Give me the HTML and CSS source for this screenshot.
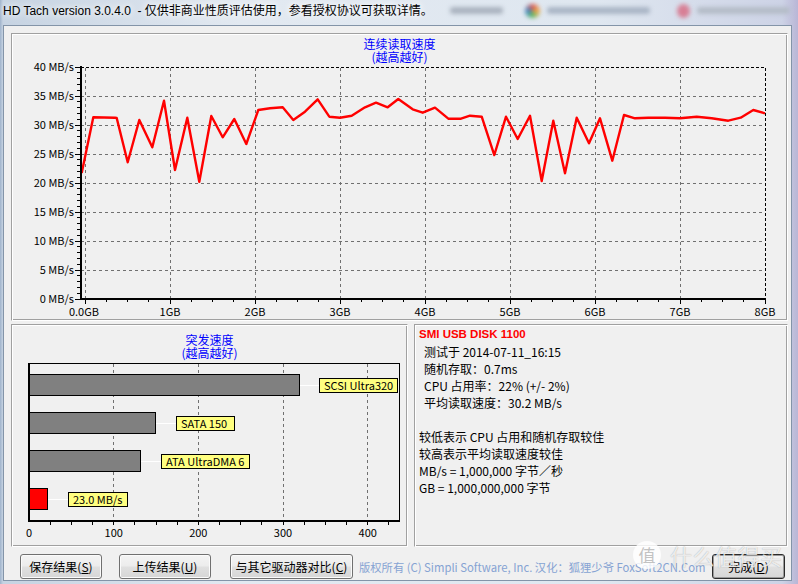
FILE: index.html
```html
<!DOCTYPE html>
<html lang="zh-CN">
<head>
<meta charset="utf-8">
<title>HD Tach</title>
<link rel="stylesheet" href="styles.css">
</head>
<body>
<div class="window">
  <div class="titlebar">
    <span class="title-text">HD Tach version 3.0.4.0&nbsp; - 仅供非商业性质评估使用，参看授权协议可获取详情。</span>
    <span class="glass">
      <span class="blur b1"></span>
      <span class="blur b2"></span>
      <span class="blur b3"></span>
      <span class="blur b4"></span>
      <span class="blur b5"></span>
    </span>
  </div>
  <div class="client">
    <section class="panel top-panel">
      <div class="chart-title">连续读取速度<br>(越高越好)</div>
      <svg class="plot" width="773" height="256" viewBox="13 63 773 256">
        <path class="grid" d="M81 96.5H765M81 125.5H765M81 154.5H765M81 183.5H765M81 212.5H765M81 241.5H765M81 270.5H765"/>
        <path class="grid" d="M85.5 68V299M170.5 68V299M255.5 68V299M340.5 68V299M425.5 68V299M510.5 68V299M595.5 68V299M680.5 68V299"/>
        <path class="frame-dash" d="M81 67.5H765.5V299"/>
        <path class="ticks" d="M75 67.5h5M75 96.5h5M75 125.5h5M75 154.5h5M75 183.5h5M75 212.5h5M75 241.5h5M75 270.5h5M75 299.5h5M77 72.5h3M77 78.5h3M77 84.5h3M77 90.5h3M77 101.5h3M77 107.5h3M77 113.5h3M77 119.5h3M77 130.5h3M77 136.5h3M77 142.5h3M77 148.5h3M77 159.5h3M77 165.5h3M77 171.5h3M77 177.5h3M77 188.5h3M77 194.5h3M77 200.5h3M77 206.5h3M77 217.5h3M77 223.5h3M77 229.5h3M77 235.5h3M77 246.5h3M77 252.5h3M77 258.5h3M77 264.5h3M77 275.5h3M77 281.5h3M77 287.5h3M77 293.5h3"/>
        <path class="ticks" d="M85.5 300v4M170.5 300v4M255.5 300v4M340.5 300v4M425.5 300v4M510.5 300v4M595.5 300v4M680.5 300v4M765.5 300v4M106.5 300v2M127.5 300v2M148.5 300v2M191.5 300v2M212.5 300v2M233.5 300v2M276.5 300v2M297.5 300v2M318.5 300v2M361.5 300v2M382.5 300v2M403.5 300v2M446.5 300v2M467.5 300v2M488.5 300v2M531.5 300v2M552.5 300v2M573.5 300v2M616.5 300v2M637.5 300v2M658.5 300v2M701.5 300v2M722.5 300v2M743.5 300v2"/>
        <polyline class="data" points="81.7,173 93.3,117.3 115,117.7 116.7,118 127.7,162.3 139.3,120 152.3,147.3 164,100.7 175,170 187.3,117.7 199.3,181.7 211.3,116 222.7,137.3 234.3,119 246.3,144 258.3,110 270,108.3 282.7,107.3 293.3,120 305,111.7 317.7,99.3 329.3,116.7 340,117.7 351.7,115.7 365,107.3 376,102.7 387.7,107.3 398.3,99 412.7,109.3 422.7,112.7 435,107.7 448.3,118.7 461,118.7 470,115.7 481.7,116.7 494.3,155 506,116.7 517.7,139 530,115.7 541.7,181 553.3,120.7 565,173.3 576.7,117.7 589,143.3 600,118.3 612.3,160.7 624,115 635,118.3 648.3,117.7 665,117.7 680,118.3 696.7,116.7 711.7,118.3 728.3,120.7 740.7,117.7 753.3,110 765,113.3"/>
        <path class="axis" d="M81 66V299H766"/>
        <text class="lbl end" x="74" y="71">40 MB/s</text>
        <text class="lbl end" x="74" y="100">35 MB/s</text>
        <text class="lbl end" x="74" y="129">30 MB/s</text>
        <text class="lbl end" x="74" y="158">25 MB/s</text>
        <text class="lbl end" x="74" y="187">20 MB/s</text>
        <text class="lbl end" x="74" y="216">15 MB/s</text>
        <text class="lbl end" x="74" y="245">10 MB/s</text>
        <text class="lbl end" x="74" y="274">5 MB/s</text>
        <text class="lbl end" x="74" y="303">0 MB/s</text>
        <text class="lbl mid" x="84" y="316">0.0GB</text>
        <text class="lbl mid" x="170" y="316">1GB</text>
        <text class="lbl mid" x="255" y="316">2GB</text>
        <text class="lbl mid" x="340" y="316">3GB</text>
        <text class="lbl mid" x="425" y="316">4GB</text>
        <text class="lbl mid" x="510" y="316">5GB</text>
        <text class="lbl mid" x="595" y="316">6GB</text>
        <text class="lbl mid" x="680" y="316">7GB</text>
        <text class="lbl mid" x="765" y="316">8GB</text>
      </svg>
    </section>
    <div class="lower">
      <section class="panel burst-panel">
        <div class="chart-title burst-title">突发速度<br>(越高越好)</div>
        <svg class="plot" width="393" height="186" viewBox="13 359 393 186">
          <path class="grid" d="M113.5 364V520M198.5 364V520M283.5 364V520M367.5 364V520"/>
          <path class="ticks" d="M50.5 522v3M71.5 522v3M92.5 522v3M113.5 522v3M134.5 522v3M156.5 522v3M177.5 522v3M198.5 522v3M219.5 522v3M240.5 522v3M261.5 522v3M283.5 522v3M304.5 522v3M325.5 522v3M346.5 522v3M367.5 522v3M388.5 522v3"/>
          <path class="frame-thin" d="M29 363.5H399.5V521"/>
          <path class="connector" d="M299 385.5H319M155.5 423.5H176M140.5 461.5H161M47.5 499.5H68"/>
          <rect class="bar" x="29.5" y="374.5" width="269.5" height="21"/>
          <rect class="bar" x="29.5" y="412.5" width="126" height="21"/>
          <rect class="bar" x="29.5" y="450.5" width="111" height="21"/>
          <rect class="bar mine" x="29.5" y="488.5" width="18" height="21"/>
          <rect class="tag" x="319.5" y="378.5" width="78" height="14"/>
          <rect class="tag" x="176.5" y="416.5" width="58" height="14"/>
          <rect class="tag" x="161.5" y="454.5" width="88" height="14"/>
          <rect class="tag" x="68.5" y="492.5" width="59" height="14"/>
          <text class="tag-text" x="324" y="390">SCSI Ultra320</text>
          <text class="tag-text" x="181" y="428">SATA 150</text>
          <text class="tag-text" x="166" y="466">ATA UltraDMA 6</text>
          <text class="tag-text" x="73" y="504">23.0 MB/s</text>
          <path class="axis" d="M29 363V521H400"/>
          <text class="lbl mid" x="29" y="537">0</text>
          <text class="lbl mid" x="113.7" y="537">100</text>
          <text class="lbl mid" x="198.3" y="537">200</text>
          <text class="lbl mid" x="283" y="537">300</text>
          <text class="lbl mid" x="367.7" y="537">400</text>
        </svg>
      </section>
      <section class="panel info-panel">
        <div class="disk-name">SMI USB DISK 1100</div>
        <div class="ind">测试于 2014-07-11_16:15</div>
        <div class="ind">随机存取：0.7ms</div>
        <div class="ind">CPU 占用率：22% (+/- 2%)</div>
        <div class="ind">平均读取速度：30.2 MB/s</div>
        <div class="blank"></div>
        <div>较低表示 CPU 占用和随机存取较佳</div>
        <div>较高表示平均读取速度较佳</div>
        <div>MB/s = 1,000,000 字节／秒</div>
        <div>GB = 1,000,000,000 字节</div>
      </section>
    </div>
    <div class="buttons">
      <button class="btn btn-save">保存结果(<u>S</u>)</button>
      <button class="btn btn-upload">上传结果(<u>U</u>)</button>
      <button class="btn btn-compare">与其它驱动器对比(<u>C</u>)</button>
      <span class="copyright">版权所有 (C) Simpli Software, Inc. 汉化：狐狸少爷 FoxSoft2CN.Com</span>
      <button class="btn btn-done">完成(<u>D</u>)</button>
    </div>
  </div>
  <div class="watermark">
    <span class="wm-logo">值</span>
    <span class="wm-text">什么值得买</span>
  </div>
</div>
</body>
</html>
```

FILE: styles.css
```css
* { box-sizing: border-box; }
html, body { margin: 0; padding: 0; }
body {
  width: 798px;
  height: 584px;
  overflow: hidden;
  font-family: "Noto Sans CJK SC", "Liberation Sans", sans-serif;
  font-size: 12px;
  color: #000;
}
.window {
  position: relative;
  width: 798px;
  height: 584px;
  display: flex;
  flex-direction: column;
  background: linear-gradient(90deg, #9fb3cb 0, #c6d3e2 3px, #e2e9f1 30%, #dfe7f0 75%, #cdd3e6 98%, #b9b6d6 100%);
}
.titlebar {
  height: 25px;
  flex: none;
  display: flex;
  align-items: center;
  padding: 0 8px 4px 3px;
}
.title-text {
  font-family: "Liberation Sans", "Noto Sans CJK SC", sans-serif;
  font-size: 12px;
  line-height: 14px;
  white-space: nowrap;
  text-shadow: 0 0 6px #fff, 0 0 10px #fff;
}
.glass {
  margin-left: auto;
  display: flex;
  align-items: center;
}
.blur {
  display: block;
  filter: blur(2px);
  border-radius: 3px;
}
.b1 { width: 53px; height: 7px; background: #aab3bf; }
.b2 { width: 15px; height: 14px; margin-left: 22px; border-radius: 50%; background: conic-gradient(#d9534f, #f0ad4e, #5cb85c, #428bca, #d9534f); }
.b3 { width: 103px; height: 7px; margin-left: 7px; background: #a9b5c5; }
.b4 { width: 13px; height: 14px; margin-left: 27px; border-radius: 50%; background: #d77f95; }
.b5 { width: 93px; height: 7px; margin-left: 7px; background: #b4bcc7; }

.client {
  margin-left: 3px;
  width: 789px;
  height: 556px;
  flex: none;
  border: 1px solid #8394a8;
  background: #f0f0f0;
  padding: 7px 3px 0 7px;
  display: flex;
  flex-direction: column;
}
.panel {
  border: 1px solid;
  border-color: #a0a0a0 #fff #fff #a0a0a0;
  padding: 1px;
  box-shadow: inset 1px 1px 0 #fff, inset -1px -1px 0 #a0a0a0;
}
.top-panel {
  width: 777px;
  height: 288px;
  flex: none;
  display: flex;
  flex-direction: column;
}
.chart-title {
  color: #0000ff;
  text-align: center;
  line-height: 13px;
  padding-top: 2px;
  height: 28px;
  flex: none;
}
.burst-title {
  padding-top: 7px;
  height: 33px;
}
.plot {
  display: block;
  overflow: visible;
  flex: none;
}
.grid {
  fill: none;
  stroke: #707070;
  stroke-width: 1;
  stroke-dasharray: 3 3;
  shape-rendering: crispEdges;
}
.frame-dash {
  fill: none;
  stroke: #000;
  stroke-width: 1;
  stroke-dasharray: 3 2;
  shape-rendering: crispEdges;
}
.frame-thin {
  fill: none;
  stroke: #000;
  stroke-width: 1;
  shape-rendering: crispEdges;
}
.ticks {
  fill: none;
  stroke: #000;
  stroke-width: 1;
  shape-rendering: crispEdges;
}
.axis {
  fill: none;
  stroke: #000;
  stroke-width: 2;
  shape-rendering: crispEdges;
}
.data {
  fill: none;
  stroke: #ff0000;
  stroke-width: 2.4;
  stroke-linejoin: round;
}
.lbl {
  font-family: "Noto Sans CJK SC", "Liberation Sans", sans-serif;
  font-size: 11px;
  fill: #000;
}
.end { text-anchor: end; }
.mid { text-anchor: middle; }
.connector {
  fill: none;
  stroke: #fff;
  stroke-width: 1;
  shape-rendering: crispEdges;
}
.bar {
  fill: #808080;
  stroke: #000;
  stroke-width: 1;
  shape-rendering: crispEdges;
}
.bar.mine { fill: #ff0000; }
.tag {
  fill: #ffff80;
  stroke: #000;
  stroke-width: 1;
  shape-rendering: crispEdges;
}
.tag-text {
  font-family: "Noto Sans CJK SC", "Liberation Sans", sans-serif;
  font-size: 11px;
  fill: #000;
}

.lower {
  display: flex;
  gap: 6px;
  margin-top: 3px;
  height: 223px;
  flex: none;
}
.burst-panel {
  width: 397px;
  flex: none;
  display: flex;
  flex-direction: column;
}
.info-panel {
  width: 374px;
  flex: none;
  padding: 1px 1px 1px 4px;
  line-height: 17px;
  white-space: nowrap;
}
.disk-name {
  font-family: "Liberation Sans", sans-serif;
  font-weight: bold;
  font-size: 11.5px;
  color: #ff0000;
}
.ind { padding-left: 5px; }
.blank { height: 17px; }

.buttons {
  display: flex;
  align-items: center;
  margin-top: 7px;
  height: 25px;
  flex: none;
}
.btn {
  flex: none;
  height: 25px;
  padding: 0;
  font-family: "Noto Sans CJK SC", "Liberation Sans", sans-serif;
  font-size: 12px;
  line-height: 23px;
  color: #000;
  border: 1px solid #707070;
  border-radius: 3px;
  background: linear-gradient(#f4f4f4 0%, #ececec 48%, #e0e0e0 52%, #d6d6d6 100%);
  box-shadow: inset 0 0 0 1px #fbfbfb;
}
.btn u { text-decoration: underline; }
.btn-save { width: 82px; margin-left: 9px; }
.btn-upload { width: 92px; margin-left: 17px; }
.btn-compare { width: 123px; margin-left: 19px; }
.copyright {
  flex: 0 1 auto;
  min-width: 0;
  overflow: hidden;
  margin-left: 6px;
  font-size: 11.3px;
  color: #86a3d3;
  white-space: nowrap;
  line-height: 16px;
}
.btn-done {
  width: 73px;
  margin-left: auto;
  margin-right: 3px;
  border-color: #2b2b2b;
  box-shadow: inset 0 0 0 1px #9a9a9a;
}
.watermark {
  position: absolute;
  left: 633px;
  top: 541px;
  display: flex;
  align-items: center;
  gap: 9px;
  pointer-events: none;
}
.wm-logo {
  width: 28px;
  height: 28px;
  border-radius: 50%;
  background: rgba(255, 255, 255, 0.82);
  color: #c2c2c2;
  font-size: 17px;
  line-height: 28px;
  text-align: center;
}
.wm-text {
  font-size: 22px;
  line-height: 28px;
  letter-spacing: 0.5px;
  color: rgba(255, 255, 255, 0.8);
  text-shadow: 0 0 1px rgba(0, 0, 0, 0.35);
}
```
